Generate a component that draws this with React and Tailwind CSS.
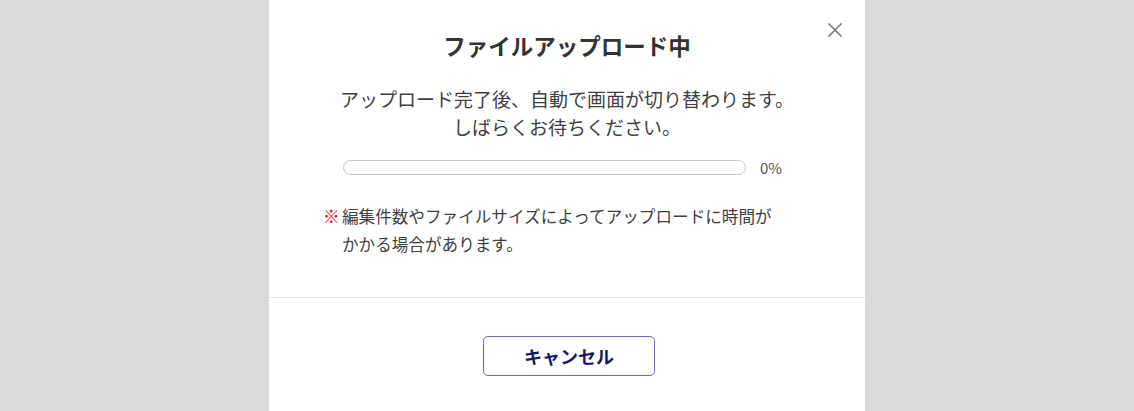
import React from 'react';

const font = { fontFamily: '"Noto Sans CJK JP", "Noto Sans", sans-serif' };

const UploadModal = () => {
    const progress = 0;

    return (
        <div className="relative w-[596px] bg-white" style={font}>
            {/* Close */}
            <button className="absolute right-[22px] top-[22px] w-[16px] h-[16px] text-[#777]" aria-label="閉じる">
                <svg viewBox="0 0 16 16" width="16" height="16" fill="none" stroke="currentColor" strokeWidth="1.6">
                    <path d="M1.5 1.5 L14.5 14.5 M14.5 1.5 L1.5 14.5" />
                </svg>
            </button>

            <div className="px-[54px] pt-[29px] pb-[39px]">
                <h2 className="text-center text-[22.5px] leading-[32px] font-bold text-[#333]">
                    ファイルアップロード中
                </h2>

                <p className="mt-[24px] text-center text-[19px] leading-[28px] text-[#3f3f3f]">
                    アップロード完了後、自動で画面が切り替わります。
                    <br />
                    しばらくお待ちください。
                </p>

                {/* Progress */}
                <div className="mt-[19px] pl-[20px] flex items-center gap-[14px]">
                    <div className="w-[403px] h-[15px] rounded-full border border-[#c8c8c8] bg-white overflow-hidden">
                        <div className="h-full bg-[#5c5ca8]" style={{ width: `${progress}%` }} />
                    </div>
                    <span className="text-[15px] leading-[15px] text-[#555]">{progress}%</span>
                </div>

                {/* Note */}
                <div className="mt-[27px] flex text-[16.6px] leading-[28px] text-[#3f3f3f]">
                    <span className="text-[#e60012] font-bold w-[19px] shrink-0">※</span>
                    <p>
                        編集件数やファイルサイズによってアップロードに時間が
                        <br />
                        かかる場合があります。
                    </p>
                </div>
            </div>

            <div className="border-t border-[#e5e5e5] flex justify-center pt-[38px] pb-[40px] pl-[4px]">
                <button className="w-[172px] h-[40px] rounded-[5px] border border-[#6a6aaa] bg-white text-[18px] font-bold text-[#16166a]">
                    キャンセル
                </button>
            </div>
        </div>
    );
};

export default function App() {
    return (
        <div className="w-[1134px] h-[411px] bg-[#d9d9d9] flex justify-center overflow-hidden">
            <UploadModal />
        </div>
    );
}
